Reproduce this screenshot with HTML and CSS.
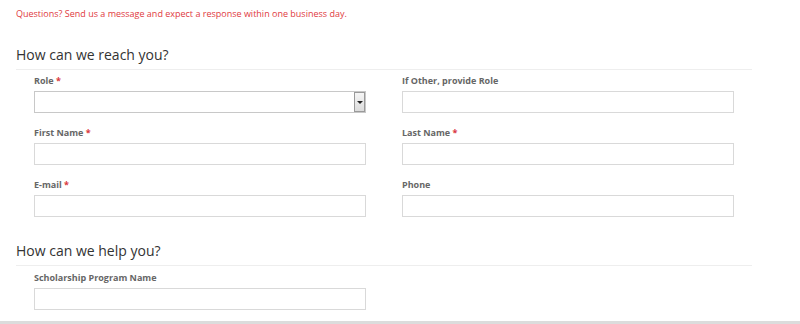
FILE: index.html
```html
<!DOCTYPE html>
<html lang="en">
<head>
    <meta charset="UTF-8">
    <title>Contact Us</title>
    <link rel="stylesheet" href="styles.css">
</head>
<body>
    <div class="page">
        <p class="intro">Questions? Send us a message and expect a response within one business day.</p>

        <section class="form-section reach">
            <h2>How can we reach you?</h2>
            <div class="fields">
                <div class="field">
                    <label>Role <span class="req">*</span></label>
                    <div class="select-box">
                        <span class="select-value"></span>
                        <span class="select-arrow"><span class="caret"></span></span>
                    </div>
                </div>
                <div class="field">
                    <label>If Other, provide Role</label>
                    <input type="text">
                </div>
                <div class="field">
                    <label>First Name <span class="req">*</span></label>
                    <input type="text">
                </div>
                <div class="field">
                    <label>Last Name <span class="req">*</span></label>
                    <input type="text">
                </div>
                <div class="field">
                    <label>E-mail <span class="req">*</span></label>
                    <input type="text">
                </div>
                <div class="field">
                    <label>Phone</label>
                    <input type="text">
                </div>
            </div>
        </section>

        <section class="form-section help">
            <h2>How can we help you?</h2>
            <div class="fields">
                <div class="field">
                    <label>Scholarship Program Name</label>
                    <input type="text">
                </div>
            </div>
        </section>
    </div>
    <div class="bottom-bar"></div>
</body>
</html>
```

FILE: styles.css
```css
body {
    margin: 0;
    padding: 0;
    font-family: 'Open Sans', 'Noto Sans', sans-serif;
    color: #333;
    background: #fff;
    height: 324px;
    overflow: hidden;
    display: flex;
    flex-direction: column;
}

.page {
    padding: 0 48px 0 16px;
    flex: 1;
}

.intro {
    margin: 7px 0 0;
    font-size: 9px;
    line-height: 14px;
    color: #e0393e;
}

.form-section h2 {
    margin: 0;
    font-size: 14px;
    font-weight: 400;
    line-height: 20px;
    color: #333;
    padding-bottom: 4px;
    border-bottom: 1px solid #eee;
}

.reach {
    margin-top: 24px;
}

.help {
    margin-top: 24px;
}

.fields {
    display: grid;
    grid-template-columns: 332px 332px;
    column-gap: 36px;
    row-gap: 14px;
    padding: 5px 0 0 18px;
}

.help .fields {
    padding-top: 6px;
}

.field label {
    display: block;
    font-size: 9px;
    font-weight: 700;
    line-height: 12px;
    color: #666;
    margin-bottom: 4px;
}

.req {
    color: #d9373d;
}

.field input,
.select-box {
    display: block;
    box-sizing: border-box;
    width: 332px;
    height: 22px;
    margin: 0;
    border: 1px solid #d9d9d9;
    background: #fff;
    outline: none;
}

.select-box {
    display: flex;
    justify-content: flex-end;
    border-color: #c8c8c8;
}

.select-arrow {
    width: 11px;
    height: 20px;
    box-sizing: border-box;
    border: 1px solid #9a9a9a;
    background: linear-gradient(to bottom, #f6f6f6, #dcdcdc);
    display: flex;
    align-items: center;
    justify-content: center;
}

.caret {
    width: 0;
    height: 0;
    border-left: 3px solid transparent;
    border-right: 3px solid transparent;
    border-top: 3px solid #222;
}

.bottom-bar {
    height: 3px;
    background: #dcdcdc;
}
```
